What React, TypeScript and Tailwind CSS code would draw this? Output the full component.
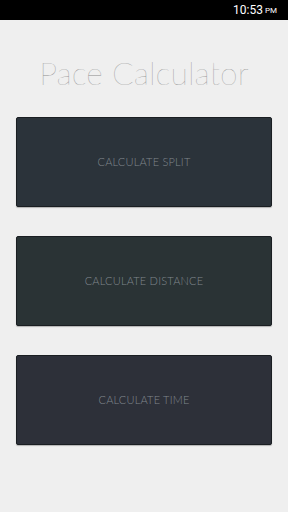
export default function App() {
  const buttons = [
    { label: "CALCULATE SPLIT", bg: "bg-[#2b333a]" },
    { label: "CALCULATE DISTANCE", bg: "bg-[#2a3335]" },
    { label: "CALCULATE TIME", bg: "bg-[#2d3039]" },
  ];

  return (
    <div className="w-[288px] h-[512px] bg-[#efefef] flex flex-col font-['Lato',sans-serif]">
      {/* status bar */}
      <div className="h-[20px] bg-black flex items-center justify-end pr-[11px] font-['Roboto',sans-serif] text-white">
        <span className="text-[12px] leading-none">10:53</span>
        <span className="text-[8px] leading-none ml-[2px] mt-[2px]">PM</span>
      </div>

      <h1 className="mt-[31px] text-center text-[32px] leading-[44px] font-thin text-[#8c8c8c]">
        Pace Calculator
      </h1>

      <div className="mt-[22px] px-[16px] flex flex-col gap-[29px]">
        {buttons.map((b) => (
          <button
            key={b.label}
            className={`${b.bg} h-[90px] w-full border border-[#1a1e22] rounded-[2px] shadow-[0_1px_1px_rgba(0,0,0,0.25)] flex items-center justify-center text-[11px] font-light text-[#80878d] tracking-[0.2px]`}
          >
            {b.label}
          </button>
        ))}
      </div>
    </div>
  );
}
